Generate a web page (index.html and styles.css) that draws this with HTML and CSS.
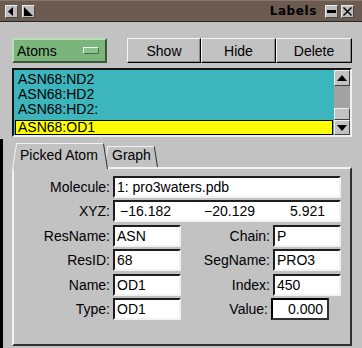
FILE: index.html
```html
<!DOCTYPE html>
<html>
<head>
<meta charset="utf-8">
<title>Labels</title>
<link rel="stylesheet" href="styles.css">
</head>
<body>
<div class="titlebar">
  <div class="tb-left">
    <span class="tbtn"><svg width="11" height="11" viewBox="0 0 11 11"><polygon points="7,1 7,10 2,5.5" fill="#000"/></svg></span>
    <span class="tbtn"><svg width="11" height="11" viewBox="0 0 11 11"><polygon points="1,1 10,10 1,10" fill="#000"/></svg></span>
  </div>
  <div class="title">Labels</div>
  <div class="tb-right">
    <span class="tbtn"><svg width="11" height="11" viewBox="0 0 11 11"><rect x="1" y="4" width="9" height="3" fill="#000"/></svg></span>
    <span class="tbtn"><svg width="11" height="11" viewBox="0 0 11 11"><path d="M1.5 1.5 L9.5 9.5 M9.5 1.5 L1.5 9.5" stroke="#000" stroke-width="1.4"/></svg></span>
  </div>
</div>

<div class="toolbar">
  <div class="menubtn"><span>Atoms</span><span class="ind"></span></div>
  <div class="btns">
    <div class="btn w74">Show</div>
    <div class="btn w75">Hide</div>
    <div class="btn w76">Delete</div>
  </div>
</div>

<div class="list">
  <div class="items">
    <div class="item">ASN68:ND2</div>
    <div class="item">ASN68:HD2</div>
    <div class="item">ASN68:HD2:</div>
    <div class="item sel">ASN68:OD1</div>
  </div>
  <div class="sb">
    <div class="arrow up"><svg width="10" height="6" viewBox="0 0 10 6"><polygon points="5,0 10,6 0,6" fill="#000"/></svg></div>
    <div class="trough"></div>
    <div class="thumb"></div>
    <div class="arrow down"><svg width="10" height="6" viewBox="0 0 10 6"><polygon points="0,0 10,0 5,6" fill="#000"/></svg></div>
  </div>
</div>

<div class="notebook">
  <div class="tabs">
    <div class="tab active">Picked Atom</div>
    <div class="tab other">Graph</div>
  </div>
  <div class="panel">
    <div class="grid">
      <div class="lbl">Molecule:</div>
      <div class="field span3">1: pro3waters.pdb</div>

      <div class="lbl">XYZ:</div>
      <div class="field span3 xyz"><span class="x1">&minus;16.182</span><span class="x2">&minus;20.129</span><span class="x3">5.921</span></div>

      <div class="lbl">ResName:</div>
      <div class="field">ASN</div>
      <div class="lbl">Chain:</div>
      <div class="field">P</div>

      <div class="lbl">ResID:</div>
      <div class="field">68</div>
      <div class="lbl">SegName:</div>
      <div class="field">PRO3</div>

      <div class="lbl">Name:</div>
      <div class="field">OD1</div>
      <div class="lbl">Index:</div>
      <div class="field">450</div>

      <div class="lbl">Type:</div>
      <div class="field">OD1</div>
      <div class="lbl vlbl">Value:</div>
      <div class="field value">0.000</div>
    </div>
  </div>
</div>
</body>
</html>
```
FILE: styles.css
```css
* { box-sizing: border-box; }
html, body { margin: 0; padding: 0; }
body {
  width: 362px;
  height: 348px;
  overflow: hidden;
  background: #c2c2c2;
  font-family: "Liberation Sans", Arial, sans-serif;
  font-size: 14px;
  color: #000;
}

/* title bar */
.titlebar {
  height: 22px;
  background: #6c5b51;
  border-top: 1px solid #86766c;
  border-bottom: 1px solid #2b2521;
  display: flex;
  align-items: center;
  padding: 0 8px 0 5px;
}
.tb-left, .tb-right { display: flex; }
.tb-left { gap: 4px; }
.tb-right { gap: 3px; }
.tbtn {
  width: 13px;
  height: 13px;
  background: #bdbdbd;
  border: 1px solid;
  border-color: #ececec #4a4a4a #4a4a4a #ececec;
  display: flex;
}
.tbtn svg { display: block; }
.title {
  margin-left: auto;
  margin-right: 8px;
  font-family: "DejaVu Sans", sans-serif;
  font-weight: bold;
  font-size: 12px;
  letter-spacing: 0.6px;
  color: #000;
}

/* toolbar */
.toolbar {
  display: flex;
  padding: 16px 10px 0 12px;
}
.menubtn {
  width: 95px;
  height: 25px;
  background: #7bb57b;
  border: 2px solid;
  border-color: #b9dcb9 #3a5a3a #3a5a3a #b9dcb9;
  display: flex;
  align-items: center;
  padding-left: 3px;
  line-height: 16px;
}
.ind {
  margin-left: auto;
  margin-right: 6px;
  width: 16px;
  height: 7px;
  background: #8cc28c;
  border: 1px solid;
  border-color: #eef8ee #4d6e4d #4d6e4d #eef8ee;
}
.btns {
  display: flex;
  margin-left: 20px;
}
.btn {
  height: 25px;
  border: 1px solid;
  border-color: #f4f4f4 #000 #000 #f4f4f4;
  box-shadow: inset -1px -1px 0 #8a8a8a;
  display: flex;
  align-items: center;
  justify-content: center;
  line-height: 16px;
}
.w74 { width: 74px; }
.w75 { width: 75px; }
.w76 { width: 76px; }

/* list */
.list {
  margin: 5px 10px 0 12px;
  height: 69px;
  border: 2px solid;
  border-color: #151515 #f0f0f0 #f0f0f0 #151515;
  display: flex;
}
.items {
  flex: 1;
  background: #3cb5bd;
  padding-top: 2px;
  overflow: hidden;
}
.item {
  height: 15px;
  line-height: 13px;
  border: 1px solid transparent;
  margin: 0 1px;
  padding-left: 2px;
  white-space: nowrap;
}
.item.sel {
  margin-top: 3px;
  background: #ffff00;
  border-color: #000;
}
.sb {
  width: 16px;
  display: flex;
  flex-direction: column;
  background: #a2a2a2;
}
.arrow {
  background: #c2c2c2;
  border: 1px solid;
  border-color: #f0f0f0 #404040 #404040 #f0f0f0;
  display: flex;
  align-items: center;
  justify-content: center;
}
.arrow.up { height: 16px; }
.arrow.down { height: 15px; }
.trough { height: 22px; }
.thumb {
  height: 12px;
  background: #c2c2c2;
  border: 1px solid;
  border-color: #f0f0f0 #404040 #404040 #f0f0f0;
}

/* notebook */
.notebook {
  margin-top: 2px;
  border-left: 3px solid #000;
  padding: 4px 10px 0 9px;
  height: 209px;
}
.tabs {
  display: flex;
  height: 24px;
  position: relative;
  z-index: 2;
}
.tab {
  position: relative;
  height: 24px;
  padding: 4px 0 0 8px;
  line-height: 16px;
  white-space: nowrap;
}
.tab::before, .tab::after {
  content: "";
  position: absolute;
  top: 0;
  bottom: 0;
  width: 55%;
  background: #c2c2c2;
  z-index: -1;
  border-top: 1px solid #f2f2f2;
}
.tab::before {
  left: 0;
  border-left: 1px solid #f2f2f2;
  transform: skewX(-9deg);
  transform-origin: bottom left;
}
.tab::after {
  right: 0;
  border-right: 1px solid #303030;
  transform: skewX(9deg);
  transform-origin: bottom right;
}
.tab.active {
  width: 96px;
  z-index: 2;
}
.tab.active::before, .tab.active::after { bottom: -2px; }
.tab.other {
  width: 54px;
  margin-left: -4px;
  z-index: 1;
}
.tab.other::before, .tab.other::after { top: 3px; }

.panel {
  height: 179px;
  border: 2px solid;
  border-color: #f2f2f2 #303030 #303030 #f2f2f2;
  padding-top: 7px;
  position: relative;
  z-index: 1;
}
.grid {
  display: grid;
  grid-template-columns: 96px 68px 86px 68px;
  grid-auto-rows: 22px;
  column-gap: 3px;
  row-gap: 2.4px;
}
.lbl {
  text-align: right;
  line-height: 22px;
  white-space: nowrap;
}
.field {
  background: #fff;
  border: 2px solid;
  border-color: #1e1e1e #f2f2f2 #f2f2f2 #1e1e1e;
  padding-left: 2px;
  line-height: 18px;
  white-space: nowrap;
  overflow: hidden;
}
.span3 { grid-column: 2 / 5; }
.xyz { display: flex; padding-left: 0; }
.xyz span { text-align: right; }
.x1 { width: 56px; }
.x2 { width: 84px; }
.x3 { width: 70px; }
.vlbl { margin-right: 2px; }
.value {
  width: 58px;
  margin-left: -2px;
  border: 2px solid #000;
  border-color: #000 #303030 #303030 #000;
  text-align: right;
  padding-right: 4px;
}
```
